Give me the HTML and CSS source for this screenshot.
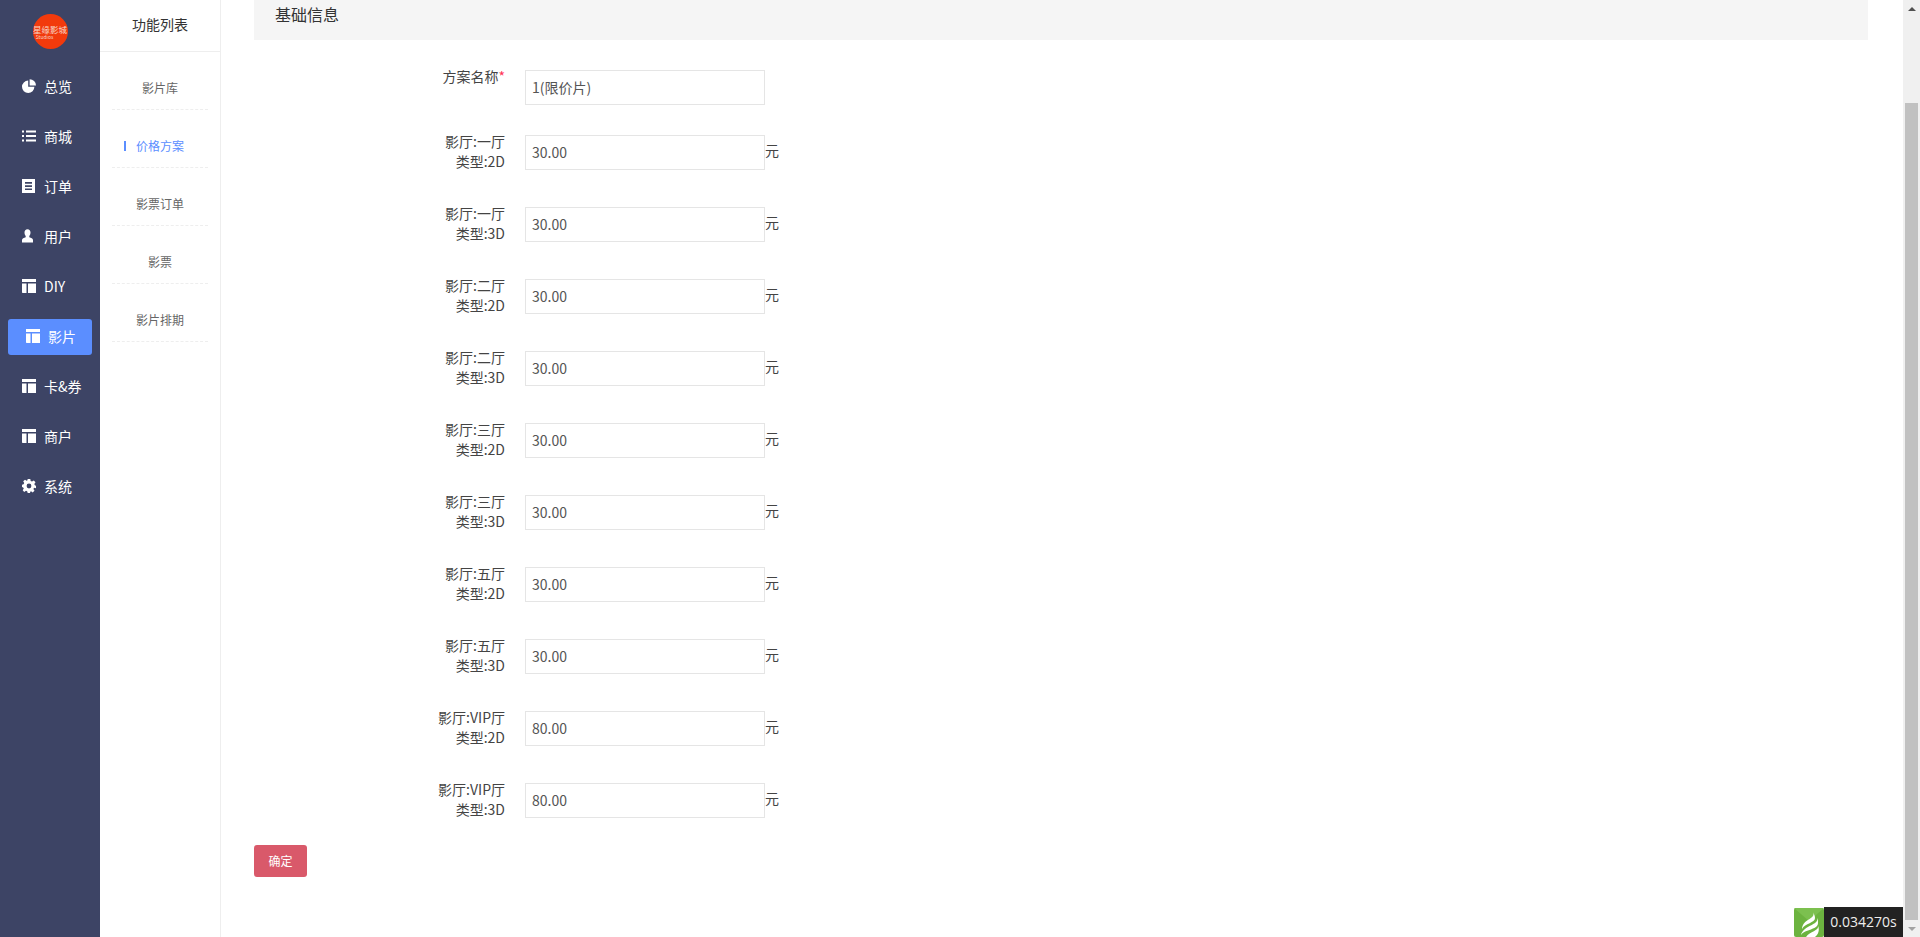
FILE: index.html
```html
<!DOCTYPE html>
<html lang="zh-CN">
<head>
    <meta charset="UTF-8">
    <title>价格方案</title>
    <link rel="stylesheet" href="styles.css">
</head>
<body>

<svg class="icon-defs" width="0" height="0">
    <symbol id="i-pie" viewBox="0 0 14 14">
        <path d="M6.2 1.6V7.8H12.4A6.2 6.2 0 1 1 6.2 1.6Z"/>
        <path d="M7.6 0.2A6.4 6.4 0 0 1 14 6.6H7.6Z"/>
    </symbol>
    <symbol id="i-list" viewBox="0 0 14 14">
        <path d="M0 1.5H2V3.5H0ZM4 1.5H14.5V3.5H4ZM0 6H2V8H0ZM4 6H14.5V8H4ZM0 10.5H2V12.5H0ZM4 10.5H14.5V12.5H4Z"/>
    </symbol>
    <symbol id="i-doc" viewBox="0 0 14 14">
        <path fill-rule="evenodd" d="M0 0H13V14H0ZM3 3V4.7H10V3ZM3 6.2V7.9H10V6.2ZM3 9.4V11.1H10V9.4Z"/>
    </symbol>
    <symbol id="i-user" viewBox="0 0 14 14">
        <path d="M5.5 0.3C7.4 0.3 8.5 1.7 8.5 3.6C8.5 5 8 6.1 7.3 6.9V8.2C9 8.8 11 9.4 11 11V13.4H0V11C0 9.4 2 8.8 3.7 8.2V6.9C3 6.1 2.5 5 2.5 3.6C2.5 1.7 3.6 0.3 5.5 0.3Z"/>
    </symbol>
    <symbol id="i-table" viewBox="0 0 14 14">
        <path d="M0 0H14.5V3H0ZM0 4.5H4.5V14H1C0.4 14 0 13.6 0 13ZM6 4.5H14.5V13C14.5 13.6 14.1 14 13.5 14H6Z"/>
    </symbol>
    <symbol id="i-gear" viewBox="0 0 14 14">
        <path fill-rule="evenodd" d="M5.7 0H8.3L8.7 2A5.2 5.2 0 0 1 10 2.6L11.8 1.5L13.5 3.3L12.3 5A5.2 5.2 0 0 1 12.9 6.3L14 6.7V9.3L12 8.7A5.2 5.2 0 0 1 11.4 10L12.5 11.8L10.7 13.5L9 12.3A5.2 5.2 0 0 1 8.3 12.7L8 14H5.7L5.3 12.4A5.2 5.2 0 0 1 4 11.8L2.2 12.9L0.7 11.2L1.8 9.5A5.2 5.2 0 0 1 1.2 8.4L0 8V5.7L1.6 5.3A5.2 5.2 0 0 1 2.2 4L1.2 2.3L3 0.7L4.6 1.8A5.2 5.2 0 0 1 5.3 1.5ZM7 4.6A2.4 2.4 0 1 0 7 9.4A2.4 2.4 0 1 0 7 4.6Z"/>
    </symbol>
</svg>

<div class="page">
    <aside class="sidebar">
        <div class="logo">
            <div class="logo-circle">
                <span class="logo-name">星缘影城</span>
                <span class="logo-sub">Studios</span>
            </div>
        </div>
        <nav class="menu">
            <a class="menu-item"><svg class="menu-icon"><use href="#i-pie"/></svg>总览</a>
            <a class="menu-item"><svg class="menu-icon"><use href="#i-list"/></svg>商城</a>
            <a class="menu-item"><svg class="menu-icon"><use href="#i-doc"/></svg>订单</a>
            <a class="menu-item"><svg class="menu-icon"><use href="#i-user"/></svg>用户</a>
            <a class="menu-item"><svg class="menu-icon"><use href="#i-table"/></svg>DIY</a>
            <a class="menu-item active"><svg class="menu-icon"><use href="#i-table"/></svg>影片</a>
            <a class="menu-item"><svg class="menu-icon"><use href="#i-table"/></svg>卡&amp;券</a>
            <a class="menu-item"><svg class="menu-icon"><use href="#i-table"/></svg>商户</a>
            <a class="menu-item"><svg class="menu-icon"><use href="#i-gear"/></svg>系统</a>
        </nav>
    </aside>

    <aside class="subnav">
        <div class="subnav-title">功能列表</div>
        <ul class="subnav-list">
            <li>影片库</li>
            <li class="active">价格方案</li>
            <li>影票订单</li>
            <li>影票</li>
            <li>影片排期</li>
        </ul>
    </aside>

    <main class="content">
        <div class="panel-head">基础信息</div>
        <form class="form">
            <div class="form-row first">
                <label class="form-label">方案名称<span class="required">*</span></label>
                <input class="form-input" type="text" value="1(限价片)">
            </div>
            <div class="form-row">
                <label class="form-label">影厅:一厅<br>类型:2D</label>
                <input class="form-input" type="text" value="30.00"><span class="unit">元</span>
            </div>
            <div class="form-row">
                <label class="form-label">影厅:一厅<br>类型:3D</label>
                <input class="form-input" type="text" value="30.00"><span class="unit">元</span>
            </div>
            <div class="form-row">
                <label class="form-label">影厅:二厅<br>类型:2D</label>
                <input class="form-input" type="text" value="30.00"><span class="unit">元</span>
            </div>
            <div class="form-row">
                <label class="form-label">影厅:二厅<br>类型:3D</label>
                <input class="form-input" type="text" value="30.00"><span class="unit">元</span>
            </div>
            <div class="form-row">
                <label class="form-label">影厅:三厅<br>类型:2D</label>
                <input class="form-input" type="text" value="30.00"><span class="unit">元</span>
            </div>
            <div class="form-row">
                <label class="form-label">影厅:三厅<br>类型:3D</label>
                <input class="form-input" type="text" value="30.00"><span class="unit">元</span>
            </div>
            <div class="form-row">
                <label class="form-label">影厅:五厅<br>类型:2D</label>
                <input class="form-input" type="text" value="30.00"><span class="unit">元</span>
            </div>
            <div class="form-row">
                <label class="form-label">影厅:五厅<br>类型:3D</label>
                <input class="form-input" type="text" value="30.00"><span class="unit">元</span>
            </div>
            <div class="form-row">
                <label class="form-label">影厅:VIP厅<br>类型:2D</label>
                <input class="form-input" type="text" value="80.00"><span class="unit">元</span>
            </div>
            <div class="form-row">
                <label class="form-label">影厅:VIP厅<br>类型:3D</label>
                <input class="form-input" type="text" value="80.00"><span class="unit">元</span>
            </div>
            <button class="btn-submit" type="button">确定</button>
        </form>
    </main>

    <div class="scrollbar">
        <div class="scroll-arrow up"></div>
        <div class="scroll-track"><div class="scroll-thumb"></div></div>
        <div class="scroll-arrow down"></div>
    </div>
</div>

<div class="trace-badge">
    <svg class="trace-logo" viewBox="0 0 30 29">
        <rect width="30" height="29" rx="2" fill="#6cb33f"/>
        <path d="M0 0H30L15 13Z" fill="#7cc04f"/>
        <path d="M19 4C22 10 12 11 9 17C8 19 8 20 8 21C11 15 21 15 21 10C21 8 20 6 19 4Z" fill="#fff"/>
        <path d="M23 10C25 16 14 17 9 23C8 24 7 26 7 27C11 21 24 22 24 15C24 13 24 11 23 10Z" fill="#fff"/>
        <path d="M24 18C25 23 16 23 12 29H21C24 27 26 22 24 18Z" fill="#fff"/>
    </svg>
    <div class="trace-time">0.034270s</div>
</div>

</body>
</html>
```

FILE: styles.css
```css
html, body {
    margin: 0;
    height: 100%;
    overflow: hidden;
}
body {
    background-color: #ffffff;
    color: #333333;
    font-family: "Noto Sans CJK SC", "Open Sans", sans-serif;
    font-size: 14px;
}
.icon-defs {
    position: absolute;
}
.page {
    display: flex;
    height: 937px;
}

/* left menu */
.sidebar {
    width: 100px;
    flex-shrink: 0;
    background-color: #3d4465;
}
.logo {
    display: flex;
    justify-content: center;
    padding-top: 14px;
    height: 47px;
}
.logo-circle {
    width: 35px;
    height: 35px;
    border-radius: 50%;
    background-color: #f23a0c;
    color: #f8d5c6;
    display: flex;
    flex-direction: column;
    align-items: center;
    justify-content: center;
    line-height: 1;
}
.logo-name {
    font-size: 8.5px;
    margin-top: 1px;
}
.logo-sub {
    font-size: 5px;
    margin-right: 11px;
}
.menu {
    display: flex;
    flex-direction: column;
    padding: 0 8px;
}
.menu-item {
    height: 50px;
    display: flex;
    align-items: center;
    padding-left: 14px;
    color: #ffffff;
    font-size: 14px;
    line-height: 36px;
}
.menu-item.active {
    height: 36px;
    box-sizing: border-box;
    margin: 8px 0 6px;
    padding: 0 0 2px 18px;
    background-color: #5b8eff;
    border-radius: 3px;
}
.menu-icon {
    width: 14px;
    height: 14px;
    margin-right: 8px;
    fill: #ffffff;
    overflow: visible;
}

/* second menu */
.subnav {
    width: 120px;
    flex-shrink: 0;
    border-right: 1px solid #eeeeee;
}
.subnav-title {
    height: 51px;
    line-height: 48px;
    text-align: center;
    border-bottom: 1px solid #eeeeee;
    color: #333333;
}
.subnav-list {
    list-style: none;
    margin: 0;
    padding: 0 12px;
}
.subnav-list li {
    height: 57px;
    line-height: 72px;
    text-align: center;
    font-size: 12px;
    color: #666666;
    border-bottom: 1px dashed #eeeeee;
    position: relative;
}
.subnav-list li.active {
    color: #5b8eff;
}
.subnav-list li.active::before {
    content: "";
    position: absolute;
    left: 12px;
    top: 31px;
    width: 2px;
    height: 10px;
    background-color: #5b8eff;
}

/* main */
.content {
    flex: 1;
    padding: 0 35px 0 33px;
}
.panel-head {
    height: 40px;
    padding-left: 21px;
    line-height: 28px;
    background-color: #f5f5f5;
    color: #333333;
    font-size: 16px;
}
.form {
    padding-top: 30px;
}
.form-row {
    display: flex;
    align-items: flex-start;
    height: 42px;
    margin-bottom: 30px;
}
.form-row.first {
    height: 35px;
}
.form-label {
    width: 251px;
    margin-top: -4px;
    margin-right: 20px;
    text-align: right;
    line-height: 20px;
    color: #444444;
}
.required {
    color: #ff3355;
}
.form-input {
    width: 240px;
    height: 35px;
    box-sizing: border-box;
    padding: 0 6px 2px;
    border: 1px solid #e5e5e5;
    color: #555555;
    font-family: "Noto Sans CJK SC", "Open Sans", sans-serif;
    font-size: 14px;
    outline: none;
}
.unit {
    line-height: 31px;
    color: #444444;
}
.btn-submit {
    display: block;
    width: 53px;
    height: 32px;
    margin-top: -10px;
    padding: 0 0 2px;
    border: none;
    border-radius: 3px;
    background-color: #d9596a;
    color: #ffffff;
    font-family: "Noto Sans CJK SC", "Open Sans", sans-serif;
    font-size: 12px;
}

/* fake scrollbar of the window */
.scrollbar {
    width: 17px;
    flex-shrink: 0;
    display: flex;
    flex-direction: column;
    background-color: #f0f0f0;
}
.scroll-arrow {
    height: 17px;
    display: flex;
    align-items: center;
    justify-content: center;
}
.scroll-arrow::before {
    content: "";
    border-left: 4px solid transparent;
    border-right: 4px solid transparent;
}
.scroll-arrow.up::before {
    border-bottom: 4px solid #505050;
}
.scroll-arrow.down::before {
    border-top: 4px solid #a3a3a3;
}
.scroll-track {
    flex: 1;
    padding: 86px 2px 0;
}
.scroll-thumb {
    height: 817px;
    background-color: #c1c1c1;
}

/* trace badge */
.trace-badge {
    position: fixed;
    right: 17px;
    bottom: 0;
    display: flex;
    align-items: flex-end;
}
.trace-logo {
    width: 30px;
    height: 29px;
    display: block;
}
.trace-time {
    width: 79px;
    height: 30px;
    line-height: 30px;
    text-align: center;
    background-color: #222222;
    color: #eeeeee;
    font-family: "Open Sans", sans-serif;
    font-size: 14px;
}
```
